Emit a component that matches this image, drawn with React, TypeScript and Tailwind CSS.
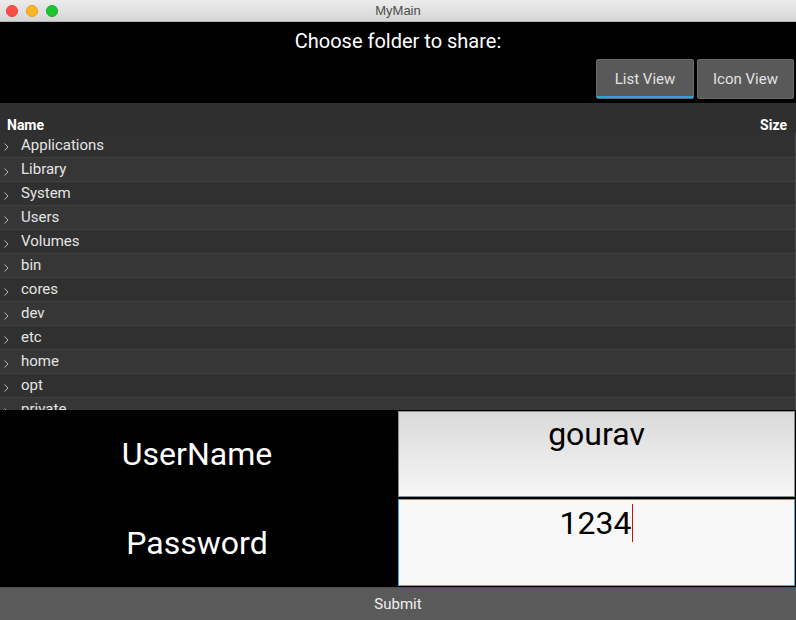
import React from 'react';

const folders = [
  'Applications',
  'Library',
  'System',
  'Users',
  'Volumes',
  'bin',
  'cores',
  'dev',
  'etc',
  'home',
  'opt',
  'private',
];

const Chevron: React.FC = () => (
  <svg width="7" height="10" viewBox="0 0 7 10" className="shrink-0 mt-[9px]">
    <path d="M1.5 1.5 L5 5 L1.5 8.5" fill="none" stroke="#b8b8b8" strokeWidth="1" />
  </svg>
);

const App: React.FC = () => {
  return (
    <div className="w-[796px] h-[620px] flex flex-col overflow-hidden bg-black font-['Roboto',sans-serif]">
      {/* Title bar */}
      <div className="h-[22px] shrink-0 flex items-center relative bg-gradient-to-b from-[#ececec] to-[#d6d6d6] border-b border-[#b4b4b4]">
        <div className="flex items-center gap-[8px] pl-[6px]">
          <span className="w-[12px] h-[12px] rounded-full bg-[#fd4e4a] border border-[#e2443f]"></span>
          <span className="w-[12px] h-[12px] rounded-full bg-[#fdb624] border border-[#e0a021]"></span>
          <span className="w-[12px] h-[12px] rounded-full bg-[#1dc631] border border-[#18ab2a]"></span>
        </div>
        <div className="absolute inset-0 flex items-center justify-center text-[13px] text-[#4d4d4d] font-['Liberation_Sans',sans-serif]">
          MyMain
        </div>
      </div>

      {/* Header */}
      <div className="h-[81px] shrink-0 flex flex-col">
        <div className="h-[37px] flex items-center justify-center text-[20px] text-white">
          Choose folder to share:
        </div>
        <div className="flex justify-end gap-[3px] pr-[2px]">
          <button className="w-[98px] h-[40px] rounded-[2px] bg-[#595959] border border-[#6a6a6a] text-[15px] text-[#e2e2e2] relative">
            List View
            <span className="absolute left-0 right-0 bottom-0 h-[2px] bg-[#2ea3d8]"></span>
          </button>
          <button className="w-[97px] h-[40px] rounded-[2px] bg-[#595959] border border-[#6a6a6a] text-[15px] text-[#e2e2e2]">
            Icon View
          </button>
        </div>
      </div>

      {/* Tree */}
      <div className="h-[307px] shrink-0 overflow-hidden bg-[#2f2f2f] text-[15px] text-[#e4e4e4]">
        <div className="h-[30px] flex justify-between px-[7px] pt-[14px] leading-[16px] text-[14px] font-bold text-white">
          <span>Name</span>
          <span className="pr-[2px]">Size</span>
        </div>
        <div className="border-r border-[#4a4a4a]">
          {folders.map((f, i) => (
            <div
              key={f}
              className={`h-[24px] flex items-start gap-[11px] pl-[3px] ${
                i > 0 ? 'border-t border-[#404040]' : ''
              } ${i % 2 === 1 ? 'bg-[#363636]' : 'bg-[#303030]'}`}
            >
              <Chevron />
              <span className={i > 0 ? 'leading-[22px]' : 'leading-[24px]'}>{f}</span>
            </div>
          ))}
        </div>
      </div>

      {/* Login */}
      <div className="h-[177px] shrink-0 grid grid-cols-[398px_398px]">
        <div className="flex flex-col pr-[4px] text-[32px] text-white">
          <div className="h-[88px] flex items-center justify-center">UserName</div>
          <div className="h-[89px] flex items-center justify-center">Password</div>
        </div>
        <div className="flex flex-col gap-[2px] pt-[1px] pr-[1px]">
          <div className="h-[86px] border border-[#8c8c8c] bg-gradient-to-b from-[#dadada] to-[#f6f6f6] flex justify-center pt-[3px] text-[32px] text-black leading-[38px]">
            gourav
          </div>
          <div className="h-[87px] border border-[#3fa9d8] bg-[#f8f8f8] flex justify-center pt-[4px] text-[32px] text-black leading-[38px]">
            <span>1234</span>
            <span className="w-[1px] h-[38px] bg-[#d01010] ml-[1px]"></span>
          </div>
        </div>
      </div>

      {/* Submit */}
      <button className="h-[33px] shrink-0 bg-[#5a5a5a] border-t border-[#4a4a4a] text-[15px] text-[#f0f0f0]">
        Submit
      </button>
    </div>
  );
};

export default App;
